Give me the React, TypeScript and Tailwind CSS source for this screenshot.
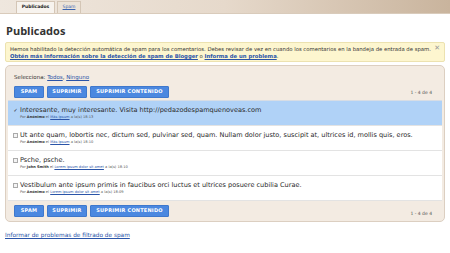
import React from "react";

const rows = [
  {
    text: "Interesante, muy interesante. Visita http://pedazodespamquenoveas.com",
    author: "Anónimo",
    post: "Más Ipsum",
    time: "18:13",
    checked: true,
  },
  {
    text: "Ut ante quam, lobortis nec, dictum sed, pulvinar sed, quam. Nullam dolor justo, suscipit at, ultrices id, mollis quis, eros.",
    author: "Anónimo",
    post: "Más Ipsum",
    time: "18:10",
    checked: false,
  },
  {
    text: "Psche, psche.",
    author: "John Smith",
    post: "Lorem ipsum dolor sit amet",
    time: "18:10",
    checked: false,
  },
  {
    text: "Vestibulum ante ipsum primis in faucibus orci luctus et ultrices posuere cubilia Curae.",
    author: "Anónimo",
    post: "Lorem ipsum dolor sit amet",
    time: "18:09",
    checked: false,
  },
];

function Buttons() {
  return (
    <div className="flex gap-[3px]">
      <div className="h-[12px] w-[30px] flex items-center justify-center rounded-[1px] bg-[#4b88e0] border border-[#3f78cc] text-white font-bold text-[5px] tracking-[0.2px]">SPAM</div>
      <div className="h-[12px] w-[40px] flex items-center justify-center rounded-[1px] bg-[#4b88e0] border border-[#3f78cc] text-white font-bold text-[5px] tracking-[0.2px]">SUPRIMIR</div>
      <div className="h-[12px] w-[79px] flex items-center justify-center rounded-[1px] bg-[#4b88e0] border border-[#3f78cc] text-white font-bold text-[5px] tracking-[0.2px]">SUPRIMIR CONTENIDO</div>
    </div>
  );
}

export default function App() {
  return (
    <div className="w-[450px] h-[253px] bg-white overflow-hidden text-[#222]" style={{ fontFamily: '"DejaVu Sans", Verdana, sans-serif' }}>
      <div className="h-[14px] bg-gradient-to-r from-[#efe7de] via-[#e6d9cb] to-[#c9b49d] flex items-end pl-[16px] gap-[2px] border-b border-[#d9cbbb]">
        <div className="h-[12px] w-[39px] bg-[#f7f3ee] border border-b-0 border-[#d4c6b6] flex items-center justify-center text-[4.5px] font-bold text-[#222]">Publicados</div>
        <div className="h-[12px] w-[24px] bg-[#ece3d8] border border-b-0 border-[#d4c6b6] flex items-center justify-center text-[4.5px] text-[#3b64b0] underline">Spam</div>
      </div>

      <div className="px-[6px] mt-[10px] h-[14px] leading-[14px] text-[11px] font-bold text-[#333]" style={{ fontFamily: '"Open Sans", Arial, sans-serif' }}>
        Publicados
      </div>

      <div className="mx-[5px] mt-[4px] h-[20px] bg-[#fdf6cf] border border-[#ece2b0] rounded-[2px] px-[4px] pt-[3px] relative text-[5.3px] leading-[7px] text-[#333] whitespace-nowrap">
        <div>Hemos habilitado la detección automática de spam para los comentarios. Debes revisar de vez en cuando los comentarios en la bandeja de entrada de spam.</div>
        <div>
          <span className="text-[#2a54a8] underline font-bold">Obtén más información sobre la detección de spam de Blogger</span> o <span className="text-[#2a54a8] underline font-bold">Informa de un problema</span>.
        </div>
        <span className="absolute right-[4px] top-[2px] text-[7px] text-[#999]">✕</span>
      </div>

      <div className="mx-[5px] mt-[3px] h-[157px] bg-[#f3ebe2] border border-[#dccfc1] rounded-[5px] px-[2px] pt-[8px] flex flex-col">
        <div className="px-[6px] text-[5.5px] leading-[7px] text-[#333]">
          Selecciona: <span className="text-[#2a54a8] underline">Todos</span>, <span className="text-[#2a54a8] underline">Ninguno</span>
        </div>
        <div className="px-[6px] mt-[5px] flex items-end justify-between">
          <Buttons />
          <div className="text-[4.5px] text-[#555] pr-[4px] mb-[1px]">1 - 4 de 4</div>
        </div>
        <div className="mt-[2px] border-t border-[#d7dde5] bg-white">
          {rows.map((r, i) => (
            <div
              key={i}
              className={`h-[25px] border-b border-[#e3e3e3] pl-[5px] pt-[5px] ${r.checked ? "bg-[#b0d2f7]" : "bg-white"}`}
            >
              <div className="flex items-center gap-[2px] text-[6.55px] leading-[8px] text-[#2a2a2a] whitespace-nowrap">
                <span className={`w-[5px] h-[5px] flex items-center justify-center text-[5px] leading-none ${r.checked ? "" : "border border-[#aaa] bg-[#f4f4f4]"}`}>
                  {r.checked ? "✓" : ""}
                </span>
                <span>{r.text}</span>
              </div>
              <div className="pl-[7px] mt-[1px] text-[3.6px] leading-[5px] text-[#555] whitespace-nowrap">
                Por <span className="font-bold text-[#333]">{r.author}</span> el{" "}
                <span className="text-[#2a54a8] underline">{r.post}</span> a la(s) {r.time}
              </div>
            </div>
          ))}
        </div>
        <div className="px-[6px] mt-[4px] flex items-end justify-between">
          <Buttons />
          <div className="text-[4.5px] text-[#555] pr-[4px] mb-[-1px]">1 - 4 de 4</div>
        </div>
      </div>

      <div className="px-[5px] mt-[9px] text-[5.8px] text-[#2a54a8] underline">
        Informar de problemas de filtrado de spam
      </div>
    </div>
  );
}
